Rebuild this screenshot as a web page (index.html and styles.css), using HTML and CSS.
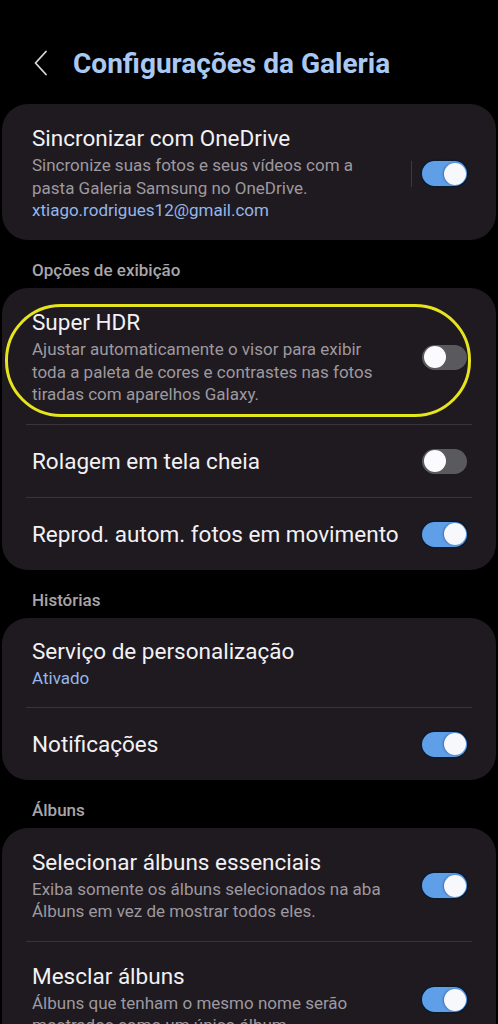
FILE: index.html
```html
<!DOCTYPE html>
<html lang="pt-BR">
<head>
<meta charset="utf-8">
<title>Configurações da Galeria</title>
<link rel="stylesheet" href="styles.css">
</head>
<body>
<header class="topbar">
  <svg class="back" width="14" height="26" viewBox="0 0 14 26"><polyline points="12,1.5 1.5,13 12,24.5" fill="none" stroke="#d8d8dc" stroke-width="1.8" stroke-linecap="round" stroke-linejoin="round"/></svg>
  <h1 class="title">Configurações da Galeria</h1>
</header>

<section class="card">
  <div class="row">
    <div class="text">
      <div class="label">Sincronizar com OneDrive</div>
      <div class="desc">Sincronize suas fotos e seus vídeos com a pasta Galeria Samsung no OneDrive.</div>
      <div class="link">xtiago.rodrigues12@gmail.com</div>
    </div>
    <span class="vline"></span>
    <span class="switch on"></span>
  </div>
</section>

<h2 class="section">Opções de exibição</h2>
<section class="card">
  <div class="row">
    <div class="text">
      <div class="label">Super HDR</div>
      <div class="desc">Ajustar automaticamente o visor para exibir toda a paleta de cores e contrastes nas fotos tiradas com aparelhos Galaxy.</div>
    </div>
    <span class="switch"></span>
  </div>
  <div class="sep"></div>
  <div class="row single">
    <div class="text"><div class="label">Rolagem em tela cheia</div></div>
    <span class="switch"></span>
  </div>
  <div class="sep"></div>
  <div class="row single">
    <div class="text"><div class="label">Reprod. autom. fotos em movimento</div></div>
    <span class="switch on"></span>
  </div>
  <span class="circle"></span>
</section>

<h2 class="section">Histórias</h2>
<section class="card">
  <div class="row compact">
    <div class="text">
      <div class="label">Serviço de personalização</div>
      <div class="link">Ativado</div>
    </div>
  </div>
  <div class="sep"></div>
  <div class="row single">
    <div class="text"><div class="label">Notificações</div></div>
    <span class="switch on"></span>
  </div>
</section>

<h2 class="section">Álbuns</h2>
<section class="card">
  <div class="row">
    <div class="text">
      <div class="label">Selecionar álbuns essenciais</div>
      <div class="desc">Exiba somente os álbuns selecionados na aba Álbuns em vez de mostrar todos eles.</div>
    </div>
    <span class="switch on"></span>
  </div>
  <div class="sep"></div>
  <div class="row">
    <div class="text">
      <div class="label">Mesclar álbuns</div>
      <div class="desc">Álbuns que tenham o mesmo nome serão mostrados como um único álbum.</div>
    </div>
    <span class="switch on"></span>
  </div>
</section>
</body>
</html>
```

FILE: styles.css
```css
html, body {
  margin: 0;
  padding: 0;
  background: #000;
}
body {
  font-family: Roboto, "Noto Sans", sans-serif;
  color: #f0eff2;
  height: 1024px;
  overflow: hidden;
}
.topbar {
  display: flex;
  align-items: center;
  height: 104px;
  padding: 22px 0 0 34px;
  box-sizing: border-box;
  gap: 25px;
}
.back { display: block; }
.title {
  margin: 0;
  font-size: 28px;
  font-weight: 700;
  color: #a9c8f2;
  letter-spacing: 0;
}
.card {
  position: relative;
  margin: 0 2px;
  background: #1f1a20;
  border-radius: 26px;
}
.row {
  display: flex;
  align-items: center;
  padding: 21px 29px 18px 30px;
}
.row.single {
  padding-top: 23px;
  padding-bottom: 22px;
}
.row.compact {
  padding-top: 20px;
  padding-bottom: 17px;
}
.text {
  flex: 1;
  min-width: 0;
}
.label {
  font-size: 22.5px;
  line-height: 27px;
  color: #f2f1f4;
}
.desc {
  margin-top: 2px;
  font-size: 17px;
  line-height: 22.5px;
  color: #9d999f;
  padding-right: 24px;
}
.link {
  font-size: 17px;
  line-height: 23px;
  color: #93b7ea;
  margin-top: 2px;
}
.desc + .link { margin-top: 0; }
.vline {
  width: 1px;
  height: 26px;
  background: #3d393e;
  margin-right: 10px;
}
.switch {
  position: relative;
  flex: none;
  width: 45px;
  height: 25px;
  border-radius: 13px;
  background: #5a595e;
  box-sizing: border-box;
}
.switch::after {
  content: "";
  position: absolute;
  top: 1.5px;
  left: 1.5px;
  width: 22px;
  height: 22px;
  border-radius: 50%;
  background: #fbfbfd;
}
.switch.on {
  background: #5f9fe8;
  box-shadow: 0 0 0 1.5px #0c1a2e;
}
.switch.on::after {
  left: auto;
  right: 1.5px;
  background: #f7f8fc;
  box-shadow: -1px 0 2px rgba(20, 40, 80, 0.4);
}
.sep {
  height: 1px;
  margin: 0 24px;
  background: #38343a;
}
.section {
  margin: 0;
  padding: 20px 0 8px 32px;
  font-size: 17px;
  line-height: 20px;
  font-weight: 500;
  color: #a9a5aa;
}
.circle {
  position: absolute;
  left: 3px;
  top: 16px;
  width: 466px;
  height: 113px;
  box-sizing: border-box;
  border: 3px solid #e6e41e;
  border-radius: 56px / 56px;
  pointer-events: none;
}
```
